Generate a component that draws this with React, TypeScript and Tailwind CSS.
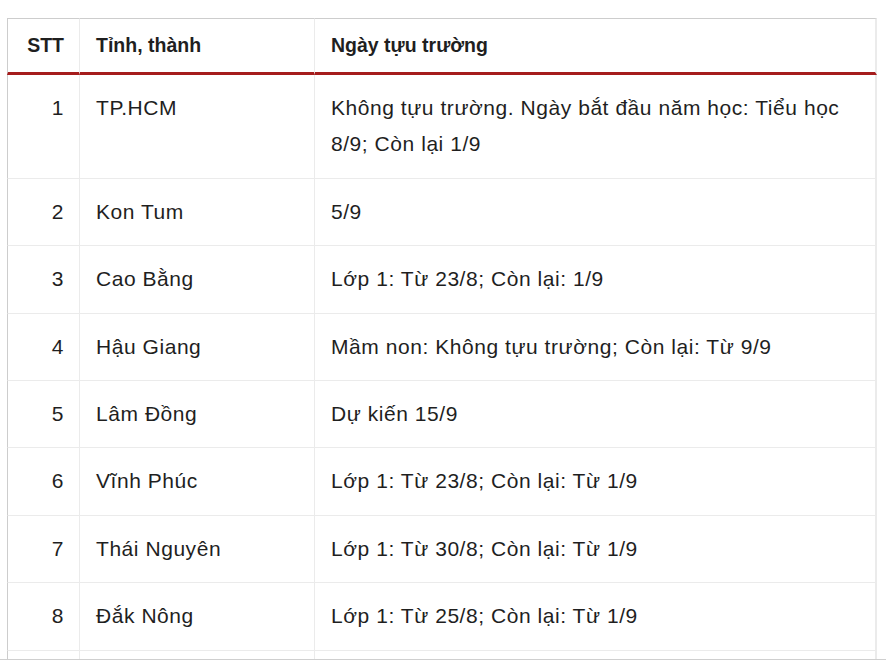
const rows: [string, string, string][] = [
  ["1", "TP.HCM", "Không tựu trường. Ngày bắt đầu năm học: Tiểu học 8/9; Còn lại 1/9"],
  ["2", "Kon Tum", "5/9"],
  ["3", "Cao Bằng", "Lớp 1: Từ 23/8; Còn lại: 1/9"],
  ["4", "Hậu Giang", "Mầm non: Không tựu trường; Còn lại: Từ 9/9"],
  ["5", "Lâm Đồng", "Dự kiến 15/9"],
  ["6", "Vĩnh Phúc", "Lớp 1: Từ 23/8; Còn lại: Từ 1/9"],
  ["7", "Thái Nguyên", "Lớp 1: Từ 30/8; Còn lại: Từ 1/9"],
  ["8", "Đắk Nông", "Lớp 1: Từ 25/8; Còn lại: Từ 1/9"],
  ["", "", ""],
]

export default function App() {
  return (
    <div className="h-[663px] w-[886px] overflow-hidden bg-white font-['Liberation_Sans',Arial,sans-serif] text-[#1f1f1f]">
      <div className="h-[660px] overflow-hidden border-b border-[#cfcfcf] pt-[18px] pl-[7px]">
        <table className="w-[870px] table-fixed border-separate border-spacing-0">
          <colgroup>
            <col className="w-[73px]" />
            <col className="w-[235px]" />
            <col className="w-[562px]" />
          </colgroup>
          <thead>
            <tr className="text-[19.5px] font-bold">
              <th className="border-t border-b-[3px] border-l border-r border-t-[#cdcdcd] border-l-[#cdcdcd] border-r-[#ebebeb] border-b-[#a51c1c] py-[12px] pr-[15px] text-right leading-[29px] font-bold">
                STT
              </th>
              <th className="border-t border-b-[3px] border-r border-t-[#cdcdcd] border-r-[#ebebeb] border-b-[#a51c1c] py-[12px] px-4 text-left leading-[29px] font-bold">
                Tỉnh, thành
              </th>
              <th className="border-t border-b-[3px] border-r-2 border-t-[#cdcdcd] border-r-[#ebebeb] border-b-[#a51c1c] py-[12px] px-4 text-left leading-[29px] font-bold">
                Ngày tựu trường
              </th>
            </tr>
          </thead>
          <tbody className="text-[21px] tracking-[0.55px]">
            {rows.map((r, i) => (
              <tr key={i}>
                <td className="border-b border-l border-r border-b-[#ebebeb] border-l-[#cdcdcd] border-r-[#ebebeb] py-[15px] pr-[15px] text-right align-top leading-[36.4px]">
                  {r[0]}
                </td>
                <td className="border-b border-r border-[#ebebeb] py-[15px] px-4 align-top leading-[36.4px]">
                  {r[1]}
                </td>
                <td className="border-b border-r-2 border-[#ebebeb] py-[15px] px-4 align-top leading-[36.4px]">
                  {r[2]}
                </td>
              </tr>
            ))}
          </tbody>
        </table>
      </div>
    </div>
  )
}
